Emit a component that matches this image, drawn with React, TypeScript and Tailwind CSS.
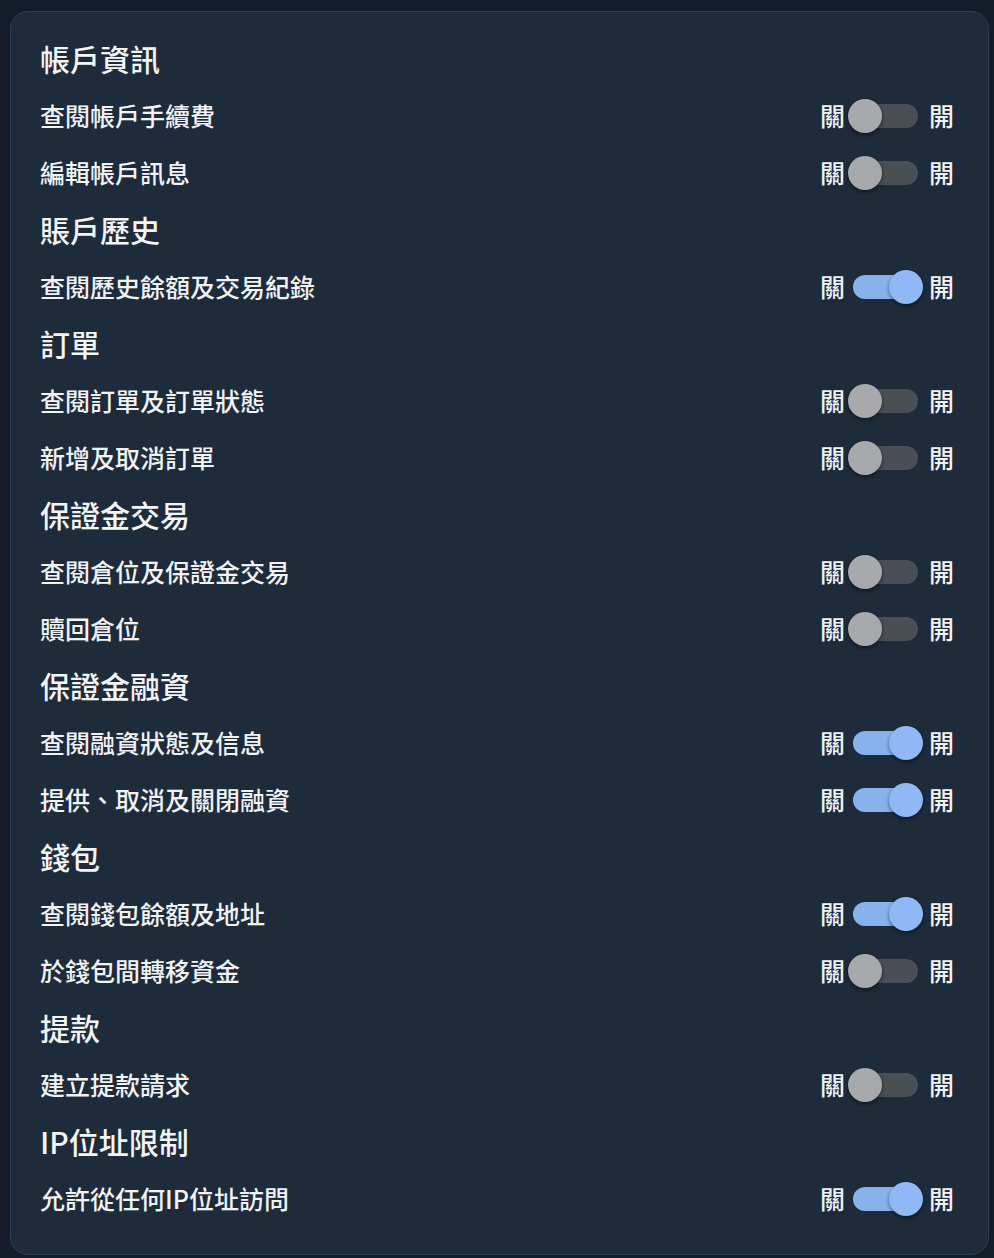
import { useState } from "react";

type Row =
  | { kind: "head"; label: string }
  | { kind: "item"; label: string; on: boolean };

const rows: Row[] = [
  { kind: "head", label: "帳戶資訊" },
  { kind: "item", label: "查閱帳戶手續費", on: false },
  { kind: "item", label: "編輯帳戶訊息", on: false },
  { kind: "head", label: "賬戶歷史" },
  { kind: "item", label: "查閱歷史餘額及交易紀錄", on: true },
  { kind: "head", label: "訂單" },
  { kind: "item", label: "查閱訂單及訂單狀態", on: false },
  { kind: "item", label: "新增及取消訂單", on: false },
  { kind: "head", label: "保證金交易" },
  { kind: "item", label: "查閱倉位及保證金交易", on: false },
  { kind: "item", label: "贖回倉位", on: false },
  { kind: "head", label: "保證金融資" },
  { kind: "item", label: "查閱融資狀態及信息", on: true },
  { kind: "item", label: "提供、取消及關閉融資", on: true },
  { kind: "head", label: "錢包" },
  { kind: "item", label: "查閱錢包餘額及地址", on: true },
  { kind: "item", label: "於錢包間轉移資金", on: false },
  { kind: "head", label: "提款" },
  { kind: "item", label: "建立提款請求", on: false },
  { kind: "head", label: "IP位址限制" },
  { kind: "item", label: "允許從任何IP位址訪問", on: true },
];

function Toggle({ initial }: { initial: boolean }) {
  const [on, setOn] = useState(initial);
  return (
    <div className="flex items-center text-[25px] leading-none text-[#f1f3f5]">
      <span>關</span>
      <button
        onClick={() => setOn(!on)}
        className="relative ml-[3px] mr-[6px] h-[34px] w-[75px]"
        aria-pressed={on}
      >
        <span
          className={`absolute left-[5px] top-[5px] h-[24px] w-[65px] rounded-full ${
            on ? "bg-[#88b2ee]" : "bg-[#4a4f55]"
          }`}
        />
        <span
          className={`absolute top-0 h-[34px] w-[34px] rounded-full shadow-[0_2px_4px_rgba(0,0,0,0.45)] transition-all ${
            on ? "left-[41px] bg-[#8fb8f4]" : "left-0 bg-[#a7a9ac]"
          }`}
        />
      </button>
      <span>開</span>
    </div>
  );
}

export default function App() {
  return (
    <main
      className="min-h-screen bg-[#141c2a] pb-[3px] pl-[10px] pr-[5px] pt-[11px]"
      style={{ fontFamily: '"Noto Sans CJK TC", "Noto Sans", sans-serif' }}
    >
      <div className="rounded-[18px] border border-[#2e3d50] bg-[#1e2b3b] pb-[27px] pl-[29px] pr-[34px] pt-[18px] font-medium">
        {rows.map((r, i) =>
          r.kind === "head" ? (
            <div key={i} className="flex h-[57px] items-center text-[30px] text-[#f3f4f6]">
              {r.label}
            </div>
          ) : (
            <div key={i} className="flex h-[57px] items-center justify-between text-[25px] text-[#f1f3f5]">
              <span>{r.label}</span>
              <Toggle initial={r.on} />
            </div>
          )
        )}
      </div>
    </main>
  );
}
